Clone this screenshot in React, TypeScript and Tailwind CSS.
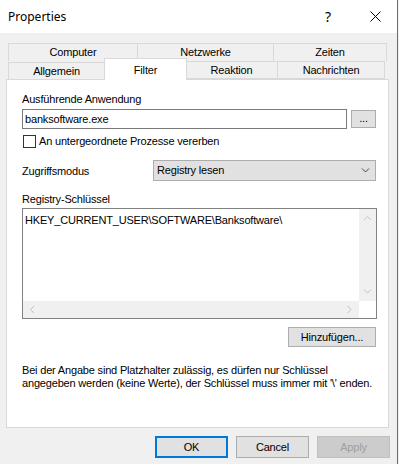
import { ReactNode } from "react";

const ui = { fontFamily: '"Liberation Sans", Arial, sans-serif' };

const Chevron = ({ dir, color = "#c2c2c2" }: { dir: "up" | "down" | "left" | "right"; color?: string }) => {
  const d = {
    up: "M1 5 L4.5 1.5 L8 5",
    down: "M1 1.5 L4.5 5 L8 1.5",
    left: "M5 1 L1.5 4.5 L5 8",
    right: "M1.5 1 L5 4.5 L1.5 8",
  }[dir];
  const vertical = dir === "up" || dir === "down";
  return (
    <svg width={vertical ? 9 : 7} height={vertical ? 7 : 9} viewBox={vertical ? "0 0 9 7" : "0 0 7 9"}>
      <path d={d} fill="none" stroke={color} strokeWidth="1" />
    </svg>
  );
};

const Tab = ({ w, children }: { w: number; children: ReactNode }) => (
  <div
    className="h-[18px] border-t border-l border-[#d9d9d9] last:border-r flex items-center justify-center text-[11px] text-black"
    style={{ width: w }}
  >
    {children}
  </div>
);

const Btn = ({ children, className = "" }: { children: ReactNode; className?: string }) => (
  <div className={`flex items-center justify-center text-[11px] ${className}`}>{children}</div>
);

export default function App() {
  return (
    <div className="w-[399px] h-[464px] bg-[#f0f0f0] overflow-hidden tracking-[-0.18px]" style={ui}>
      <div className="w-[398px] h-[464px] border-r border-[#1f7fd4] flex flex-col">
        {/* Title bar */}
        <div className="h-[33px] bg-white flex items-center pl-[8px] shrink-0 tracking-normal">
          <span className="text-[12px] text-black" style={{ fontFamily: '"Noto Sans", sans-serif' }}>
            Properties
          </span>
          <span className="ml-auto text-[14px] text-black mr-[39px]" style={{ fontFamily: '"Noto Sans", sans-serif' }}>
            ?
          </span>
          <svg width="11" height="11" viewBox="0 0 11 11" className="mr-[16px]">
            <path d="M0.5 0.5 L10.5 10.5 M10.5 0.5 L0.5 10.5" stroke="#000" strokeWidth="1" />
          </svg>
        </div>

        {/* Tabs */}
        <div className="mt-[10px] pl-[8px] flex">
          <Tab w={129}>Computer</Tab>
          <Tab w={136}>Netzwerke</Tab>
          <Tab w={114}>Zeiten</Tab>
        </div>
        <div className="pl-[8px] flex items-end relative z-10 -mb-px">
          <Tab w={96}>Allgemein</Tab>
          <div className="w-[83px] h-[22px] -mt-[3px] bg-white border-t border-x border-[#d9d9d9] flex items-start justify-center pt-[3px] text-[11px] -mr-px">
            Filter
          </div>
          <div className="w-[92px] h-[18px] border-t border-r border-[#d9d9d9] flex items-center justify-center text-[11px] mb-px border-b">
            Reaktion
          </div>
          <div className="w-[107px] h-[18px] border-t border-r border-[#d9d9d9] flex items-center justify-center text-[11px] mb-px border-b">
            Nachrichten
          </div>
        </div>

        {/* Panel */}
        <div className="ml-[6px] w-[383px] h-[349px] bg-white border border-[#d9d9d9] pl-[15px] flex flex-col text-[11px] text-black">
          <div className="mt-[11px] h-[16px] leading-[16px]">Ausführende Anwendung</div>
          <div className="mt-[2px] flex">
            <div className="w-[325px] h-[20px] border border-[#7a7a7a] flex items-center pl-[2px]">banksoftware.exe</div>
            <Btn className="ml-[4px] mt-[1px] w-[25px] h-[18px] bg-[#e1e1e1] border border-[#adadad] pb-[2px]">...</Btn>
          </div>
          <div className="mt-[6px] h-[13px] flex items-center">
            <div className="w-[13px] h-[13px] border border-[#333] bg-white ml-[1px]" />
            <span className="ml-[3px]">An untergeordnete Prozesse vererben</span>
          </div>
          <div className="mt-[12px] flex items-center h-[21px]">
            <span className="w-[131px] pt-[1px]">Zugriffsmodus</span>
            <div className="w-[223px] h-[21px] bg-[#e1e1e1] border border-[#adadad] flex items-center pl-[3px]">
              Registry lesen
              <span className="ml-auto mr-[5px] flex">
                <Chevron dir="down" color="#444" />
              </span>
            </div>
          </div>
          <div className="mt-[10px] h-[16px] leading-[16px]">Registry-Schlüssel</div>
          <div className="mt-[1px] w-[355px] h-[111px] border border-[#828282] bg-white grid grid-cols-[1fr_17px] grid-rows-[1fr_17px]">
            <div className="pl-[2px] pt-[3px]">HKEY_CURRENT_USER\SOFTWARE\Banksoftware\</div>
            <div className="bg-[#f0f0f0] flex flex-col items-center justify-between py-[6px]">
              <Chevron dir="up" />
              <Chevron dir="down" />
            </div>
            <div className="bg-[#f0f0f0] flex items-center justify-between px-[6px]">
              <Chevron dir="left" />
              <Chevron dir="right" />
            </div>
            <div className="bg-white" />
          </div>
          <div className="mt-[8px] flex">
            <Btn className="ml-[266px] w-[88px] h-[20px] bg-[#e1e1e1] border border-[#adadad]">Hinzufügen...</Btn>
          </div>
          <div className="mt-[17px] leading-[13px]">
            Bei der Angabe sind Platzhalter zulässig, es dürfen nur Schlüssel
            <br />
            angegeben werden (keine Werte), der Schlüssel muss immer mit '\' enden.
          </div>
        </div>

        {/* Bottom buttons */}
        <div className="mt-[8px] flex pl-[155px] gap-[8px]">
          <Btn className="w-[73px] h-[22px] bg-[#e1e1e1] border-2 border-[#0078d7]">OK</Btn>
          <Btn className="w-[73px] h-[22px] bg-[#e1e1e1] border border-[#adadad]">Cancel</Btn>
          <Btn className="w-[73px] h-[22px] bg-[#cccccc] border border-[#bfbfbf] text-[#a0a0a0]">Apply</Btn>
        </div>
      </div>
    </div>
  );
}
